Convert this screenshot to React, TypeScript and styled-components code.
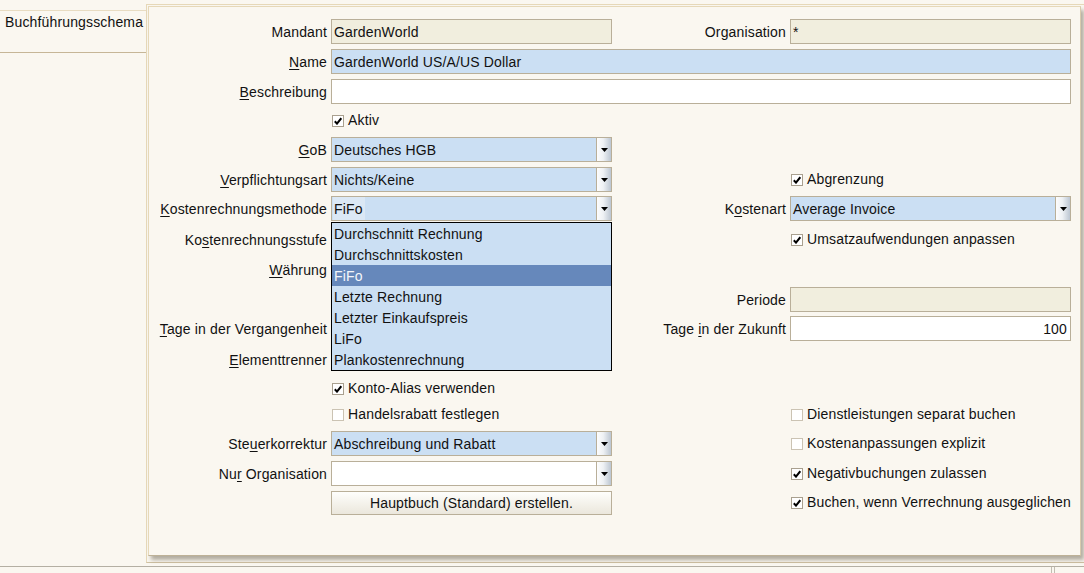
import React from 'react';
import styled, { createGlobalStyle, css } from 'styled-components';

const Global = createGlobalStyle`
  html, body { margin: 0; padding: 0; background: #faf7f0; }
  body { font-family: "Liberation Sans", Arial, sans-serif; font-size: 14px; color: #111; letter-spacing: 0.15px; }
  #root { width: 1084px; height: 573px; overflow: hidden; }
`;

type Pos = { $r: number; $c: number; $span?: number };
type Tone = 'readonly' | 'mandatory' | 'plain';

const toneBg: Record<Tone, string> = {
  readonly: '#f1eede',
  mandatory: '#cbdff3',
  plain: '#ffffff',
};

const placed = css<Pos>`
  grid-row: ${(p) => p.$r};
  grid-column: ${(p) => p.$c} / span ${(p) => p.$span ?? 1};
`;

const Shell = styled.div`
  display: flex;
  flex-direction: column;
  width: 1084px;
  height: 573px;
  background: #faf7f0;
  overflow: hidden;
`;

const Main = styled.div`
  display: flex;
  align-items: flex-start;
  height: 566px;
  flex: none;
`;

const TabColumn = styled.div`
  width: 146px;
  flex: none;
  padding-top: 10px;
`;

const Tab = styled.div`
  height: 43px;
  box-sizing: border-box;
  border-top: 1px solid #e8dcc2;
  border-bottom: 1px solid #c6b697;
  padding: 3px 0 0 5px;
  line-height: 17px;
  white-space: nowrap;
`;

const Frame = styled.div`
  flex: 1;
  margin-top: 4px;
  height: 559px;
  box-sizing: border-box;
  border: 1px solid #e6d8b8;
  border-right: none;
  border-bottom-color: #cfc1a2;
  padding: 1px 0 6px 1px;
`;

const Panel = styled.div`
  width: 933px;
  height: 550px;
  box-sizing: border-box;
  border: 1px solid #e6d8b8;
  border-right-color: #d8cbae;
  border-bottom-color: #bdb197;
  background: #faf7f0;
  box-shadow: 3px 4px 4px rgba(70, 60, 40, 0.4);
  padding: 12px 9px 0 0;
`;

const Form = styled.div`
  display: grid;
  grid-template-columns: 178px 281px 170px 281px;
  column-gap: 4px;
  grid-template-rows: 30px 30px 29px 29px 30px 29px 31px 30px 30px 29px 31px 29px 26px 29px 30px 29px 25px;
  align-items: start;
`;

const Label = styled.label<Pos>`
  ${placed}
  display: block;
  height: 25px;
  box-sizing: border-box;
  padding-top: 5px;
  text-align: right;
  white-space: nowrap;
  line-height: 17px;
  u { text-decoration: underline; text-underline-offset: 2px; }
`;

const FieldBox = styled.div<Pos & { $tone: Tone; $right?: boolean }>`
  ${placed}
  height: 25px;
  box-sizing: border-box;
  border: 1px solid #b9af99;
  background: ${(p) => toneBg[p.$tone]};
  padding: 2px 3px 0 2px;
  display: flex;
  align-items: center;
  justify-content: ${(p) => (p.$right ? 'flex-end' : 'flex-start')};
  line-height: 17px;
  white-space: nowrap;
  overflow: hidden;
`;

const ComboBox = styled.div<Pos & { $tone: Tone }>`
  ${placed}
  position: relative;
  height: 25px;
  box-sizing: border-box;
  border: 1px solid #b9af99;
  background: ${(p) => toneBg[p.$tone]};
  display: flex;
`;

const ComboValue = styled.div`
  flex: 1;
  display: flex;
  align-items: stretch;
  padding-left: 2px;
  white-space: nowrap;
  overflow: hidden;
`;

const ValueText = styled.span<{ $focus?: boolean }>`
  display: flex;
  align-items: center;
  padding: 2px ${(p) => (p.$focus ? '2px' : '0')} 0 ${(p) => (p.$focus ? '1px' : '0')};
  margin-left: ${(p) => (p.$focus ? '-1px' : '0')};
  line-height: 17px;
  background: ${(p) => (p.$focus ? '#dbe8f5' : 'transparent')};
`;

const ComboArrow = styled.div`
  width: 15px;
  flex: none;
  box-sizing: border-box;
  border-left: 1px solid #b9af99;
  background: linear-gradient(to right, #fdfdfd 0%, #eef1f4 45%, #bcc6d2 100%);
  display: flex;
  align-items: center;
  justify-content: center;
`;

const Popup = styled.ul`
  position: absolute;
  left: -1px;
  right: -1px;
  top: calc(100% + 2px);
  z-index: 5;
  margin: 0;
  padding: 0;
  list-style: none;
  border: 1px solid #000;
  background: #cbdff3;
`;

const PopupItem = styled.li<{ $selected?: boolean }>`
  height: 21px;
  box-sizing: border-box;
  padding: 1px 0 0 2px;
  line-height: 20px;
  white-space: nowrap;
  background: ${(p) => (p.$selected ? '#6688bb' : 'transparent')};
  color: ${(p) => (p.$selected ? '#f4f6fa' : '#111')};
`;

const CheckRow = styled.label<Pos>`
  ${placed}
  height: 25px;
  box-sizing: border-box;
  display: flex;
  align-items: center;
  gap: 4px;
  padding-left: 1px;
  white-space: nowrap;
  line-height: 17px;
`;

const Box = styled.span<{ $on: boolean }>`
  width: 12px;
  height: 12px;
  flex: none;
  box-sizing: border-box;
  border: 1px solid ${(p) => (p.$on ? '#a9a08f' : '#cbc3b3')};
  background: #fff;
  display: flex;
  align-items: center;
  justify-content: center;
`;

const ActionButton = styled.button<Pos>`
  ${placed}
  height: 24px;
  margin-top: 1px;
  box-sizing: border-box;
  border: 1px solid #b9af99;
  background: linear-gradient(#fefefc, #ebe7dc);
  font: inherit;
  letter-spacing: inherit;
  color: #111;
  line-height: 17px;
  padding: 0;
  border-radius: 0;
`;

const StatusBar = styled.div`
  height: 7px;
  flex: none;
  box-sizing: border-box;
  border-top: 1px solid #b4afa3;
  display: flex;
`;

const StatusCell = styled.div`
  width: 1052px;
  box-sizing: border-box;
  border-right: 1px solid #c2bdb1;
`;

const StatusTail = styled.div`
  flex: 1;
  margin-left: 2px;
  border-left: 1px solid #c2bdb1;
`;

const Arrow = () => (
  <svg width="7" height="4" viewBox="0 0 7 4" aria-hidden>
    <path d="M0 0 H7 L3.5 4 Z" fill="#000" />
  </svg>
);

const Tick = () => (
  <svg width="8" height="8" viewBox="0 0 8 8" aria-hidden>
    <path d="M0.8 4.2 L3 6.6 L7.3 1.2" fill="none" stroke="#000" strokeWidth="2" />
  </svg>
);

const Check = ({ r, c, on, text }: { r: number; c: number; on: boolean; text: string }) => (
  <CheckRow $r={r} $c={c}>
    <Box $on={on}>{on && <Tick />}</Box>
    <span>{text}</span>
  </CheckRow>
);

const Combo = ({
  r,
  c,
  tone,
  value,
  focus,
  children,
}: {
  r: number;
  c: number;
  tone: Tone;
  value: string;
  focus?: boolean;
  children?: React.ReactNode;
}) => (
  <ComboBox $r={r} $c={c} $tone={tone}>
    <ComboValue>
      <ValueText $focus={focus}>{value}</ValueText>
    </ComboValue>
    <ComboArrow>
      <Arrow />
    </ComboArrow>
    {children}
  </ComboBox>
);

const methods = [
  'Durchschnitt Rechnung',
  'Durchschnittskosten',
  'FiFo',
  'Letzte Rechnung',
  'Letzter Einkaufspreis',
  'LiFo',
  'Plankostenrechnung',
];

export default function App() {
  return (
    <>
      <Global />
      <Shell>
        <Main>
          <TabColumn>
            <Tab>Buchführungsschema</Tab>
          </TabColumn>
          <Frame>
            <Panel>
              <Form>
                <Label $r={1} $c={1}>Mandant</Label>
                <FieldBox $r={1} $c={2} $tone="readonly">GardenWorld</FieldBox>
                <Label $r={1} $c={3}>Organisation</Label>
                <FieldBox $r={1} $c={4} $tone="readonly">*</FieldBox>

                <Label $r={2} $c={1}><u>N</u>ame</Label>
                <FieldBox $r={2} $c={2} $span={3} $tone="mandatory">GardenWorld US/A/US Dollar</FieldBox>

                <Label $r={3} $c={1}><u>B</u>eschreibung</Label>
                <FieldBox $r={3} $c={2} $span={3} $tone="plain" />

                <Check r={4} c={2} on text="Aktiv" />

                <Label $r={5} $c={1}><u>G</u>oB</Label>
                <Combo r={5} c={2} tone="mandatory" value="Deutsches HGB" />

                <Label $r={6} $c={1}><u>V</u>erpflichtungsart</Label>
                <Combo r={6} c={2} tone="mandatory" value="Nichts/Keine" />
                <Check r={6} c={4} on text="Abgrenzung" />

                <Label $r={7} $c={1}><u>K</u>ostenrechnungsmethode</Label>
                <Combo r={7} c={2} tone="mandatory" value="FiFo" focus>
                  <Popup>
                    {methods.map((m) => (
                      <PopupItem key={m} $selected={m === 'FiFo'}>{m}</PopupItem>
                    ))}
                  </Popup>
                </Combo>
                <Label $r={7} $c={3}>K<u>o</u>stenart</Label>
                <Combo r={7} c={4} tone="mandatory" value="Average Invoice" />

                <Label $r={8} $c={1}>Ko<u>s</u>tenrechnungsstufe</Label>
                <Check r={8} c={4} on text="Umsatzaufwendungen anpassen" />

                <Label $r={9} $c={1}><u>W</u>ährung</Label>

                <Label $r={10} $c={3}>Periode</Label>
                <FieldBox $r={10} $c={4} $tone="readonly" />

                <Label $r={11} $c={1}><u>T</u>age in der Vergangenheit</Label>
                <Label $r={11} $c={3}>Tage <u>i</u>n der Zukunft</Label>
                <FieldBox $r={11} $c={4} $tone="plain" $right>100</FieldBox>

                <Label $r={12} $c={1}><u>E</u>lementtrenner</Label>

                <Check r={13} c={2} on text="Konto-Alias verwenden" />

                <Check r={14} c={2} on={false} text="Handelsrabatt festlegen" />
                <Check r={14} c={4} on={false} text="Dienstleistungen separat buchen" />

                <Label $r={15} $c={1}>Ste<u>u</u>erkorrektur</Label>
                <Combo r={15} c={2} tone="mandatory" value="Abschreibung und Rabatt" />
                <Check r={15} c={4} on={false} text="Kostenanpassungen explizit" />

                <Label $r={16} $c={1}>Nu<u>r</u> Organisation</Label>
                <Combo r={16} c={2} tone="plain" value="" />
                <Check r={16} c={4} on text="Negativbuchungen zulassen" />

                <ActionButton $r={17} $c={2}>Hauptbuch (Standard) erstellen.</ActionButton>
                <Check r={17} c={4} on text="Buchen, wenn Verrechnung ausgeglichen" />
              </Form>
            </Panel>
          </Frame>
        </Main>
        <StatusBar>
          <StatusCell />
          <StatusTail />
        </StatusBar>
      </Shell>
    </>
  );
}
